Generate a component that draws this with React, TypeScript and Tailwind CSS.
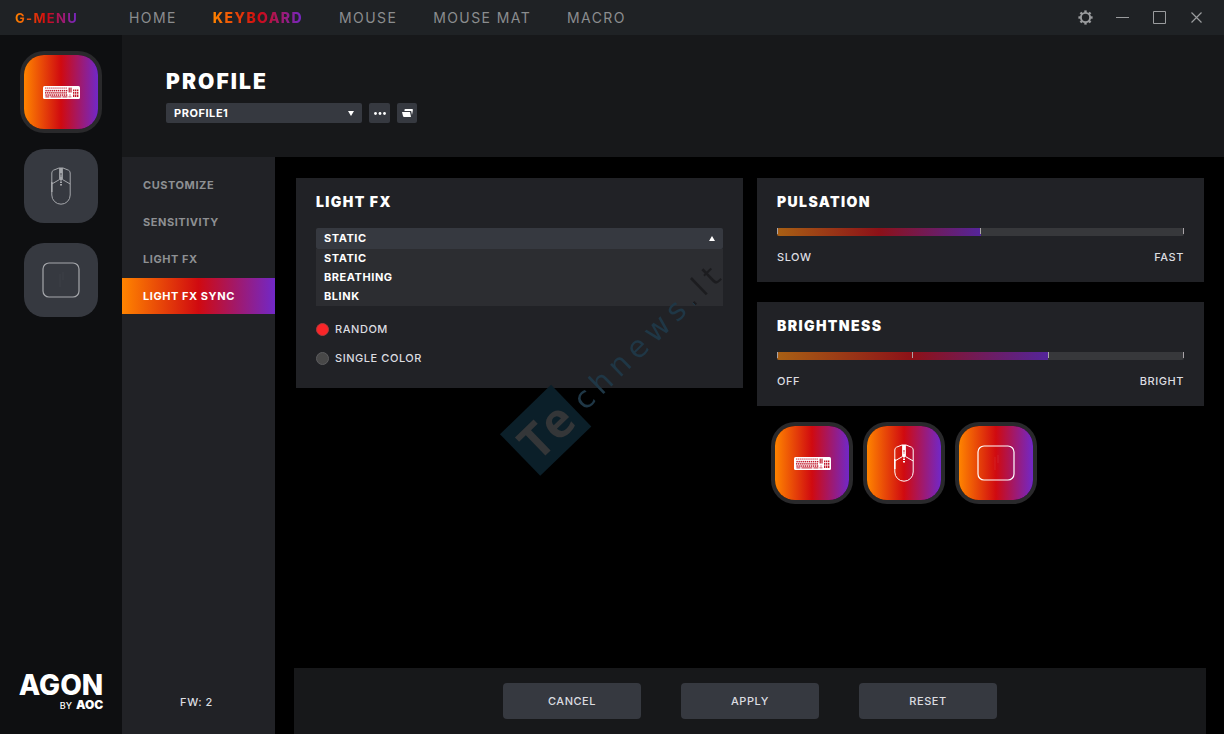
import { useState } from "react";
import type { ReactNode } from "react";
import clsx from "clsx";

const NAV_ITEMS = ["HOME", "KEYBOARD", "MOUSE", "MOUSE MAT", "MACRO"];
const SECTIONS = ["CUSTOMIZE", "SENSITIVITY", "LIGHT FX", "LIGHT FX SYNC"];
const EFFECTS = ["STATIC", "BREATHING", "BLINK"];
const BRAND = "bg-linear-to-r/srgb from-[#ff8400] via-[#d00a10] to-[#7128c8]";

function KeyboardIcon() {
  const columns = Array.from({ length: 11 }, (_, i) => i);
  return (
    <svg width="37" height="13" viewBox="0 0 37 13" aria-hidden="true">
      <rect width="37" height="13" rx="1.5" fill="#fff" />
      <g fill="#c01a2c">
        {[1.6, 3.9, 6.1, 8.3].map((y, row) =>
          columns.map((col) => (
            <rect key={`${row}-${col}`} x={2 + col * 2.05 + (row % 2) * 0.4} y={y} width="1.4" height={row === 0 ? 0.9 : 1.5} />
          )),
        )}
        <rect x="2.4" y="10.4" width="4" height="1" />
        <rect x="7.4" y="10.4" width="11" height="1" />
        <rect x="19.4" y="10.4" width="5" height="1" />
        {[25.6, 27.4].map((x) => (
          <rect key={x} x={x} y="1.6" width="1.2" height="4.9" />
        ))}
        <path d="M25.4 10.4h3v.9h-3zM26.5 8.6h1v1h-1z" />
        {[30, 32, 34].map((x) => (
          <path key={x} d={`M${x} 3.5h1.4v1.8h-1.4zM${x} 6h1.4v1.8h-1.4zM${x} 8.5h1.4v2.6h-1.4z`} />
        ))}
      </g>
    </svg>
  );
}

function MouseIcon() {
  return (
    <svg width="20" height="38" viewBox="0 0 20 38" fill="none" stroke="currentColor" aria-hidden="true">
      <path d="M8 1 2.500 3.200Q.8 4 .8 6v22a9.2 9.2 0 0 0 18.4 0V6q0-2-1.700-2.800L12 1Z" />
      <path d="M.8 17 8.4 12.6M19.2 17 11.6 12.6" />
      <path d="M.8 15v10" strokeWidth="1.5" />
      <path d="M8.6 1v11.5h2.8V1" />
      <path d="M10 1v4M10 9.5v4M10 14.5v1.5M10 17v1.5" strokeWidth="2" />
      <path d="M10 5v5" strokeWidth="2" strokeDasharray="1 .6" />
    </svg>
  );
}

function MouseMatIcon() {
  return (
    <svg width="38" height="36" viewBox="0 0 38 36" fill="none" stroke="currentColor" aria-hidden="true">
      <rect x="1" y="1" width="36" height="34" rx="6" strokeWidth="1.2" />
      <path d="M18 12v13M21 10v8" strokeWidth="0.8" opacity="0.1" />
    </svg>
  );
}

function GearIcon() {
  return (
    <svg width="15" height="15" viewBox="0 0 15 15" fill="none" stroke="currentColor" aria-hidden="true">
      <circle cx="7.5" cy="7.5" r="4.6" strokeWidth="1.9" />
      {[0, 45, 90, 135, 180, 225, 270, 315].map((angle) => (
        <path key={angle} d="M7.5 .4v2.4" strokeWidth="2.4" transform={`rotate(${angle} 7.5 7.5)`} />
      ))}
    </svg>
  );
}

function DeviceTile({ label, active, children }: { label: string; active?: boolean; children: ReactNode }) {
  return (
    <button
      type="button"
      aria-label={label}
      aria-pressed={!!active}
      className={clsx(
        "flex size-[74px] shrink-0 items-center justify-center rounded-[20px]",
        active ? `${BRAND} text-white ring-4 ring-[#29292b]` : "bg-[#363940] text-[#a5a7ab]",
      )}
    >
      {children}
    </button>
  );
}

function SliderCard(props: { title: string; low: string; high: string; steps: number; initial: number }) {
  const { title, low, high, steps, initial } = props;
  const [value, setValue] = useState(initial);
  const id = title.toLowerCase();

  return (
    <section className="bg-[#212226] px-5 pt-3.5 pb-[15px]">
      <h2 className="text-sm leading-5 font-black tracking-widest text-white">
        <label htmlFor={id}>{title}</label>
      </h2>
      <div className="relative mt-4 h-2">
        <input
          id={id}
          type="range"
          min={0}
          max={steps}
          value={value}
          onChange={(e) => setValue(Number(e.target.value))}
          className="block h-2 w-full cursor-pointer appearance-none rounded-xs bg-[#37383b] [&::-webkit-slider-thumb]:size-0 [&::-webkit-slider-thumb]:appearance-none"
        />
        <div
          className="pointer-events-none absolute inset-y-0 left-0 rounded-l-xs bg-linear-to-r/srgb from-[#a86014] via-[#8c1118] to-[#54259a]"
          style={{ width: `${(value / steps) * 100}%` }}
        />
        <div className="pointer-events-none absolute inset-x-0 top-0 flex h-1.5 justify-between">
          {Array.from({ length: steps + 1 }, (_, i) => (
            <span key={i} className="w-px bg-[#a9a4a8]" />
          ))}
        </div>
      </div>
      <div className="mt-[11px] flex justify-between text-[11px] leading-5 font-medium tracking-wider text-[#dcdde0]">
        <span>{low}</span>
        <span>{high}</span>
      </div>
    </section>
  );
}

function LightFxCard() {
  const [effect, setEffect] = useState("STATIC");
  const [mode, setMode] = useState("RANDOM");

  return (
    <section className="bg-[#212226] px-5 pt-3.5 pb-5">
      <h2 className="text-sm leading-5 font-black tracking-widest text-white">LIGHT FX</h2>
      <div className="relative mt-4">
        <select
          aria-label="Light FX"
          value={effect}
          onChange={(e) => setEffect(e.target.value)}
          className="block h-[21px] w-full appearance-none rounded-xs bg-[#363940] px-2 text-[11px] font-bold tracking-wider text-white"
        >
          {EFFECTS.map((name) => (
            <option key={name}>{name}</option>
          ))}
        </select>
        <svg className="pointer-events-none absolute top-2 right-2" width="6" height="5" viewBox="0 0 6 5" fill="#fff" aria-hidden="true">
          <path d="M3 0 6 5H0Z" />
        </svg>
      </div>
      <ul className="bg-[#2c2d31]">
        {EFFECTS.map((name) => (
          <li key={name}>
            <button
              type="button"
              onClick={() => setEffect(name)}
              className="block w-full px-2 text-left text-[11px] leading-[19px] font-bold tracking-wider text-white hover:bg-[#363940]"
            >
              {name}
            </button>
          </li>
        ))}
      </ul>
      <div className="mt-[13px] flex flex-col gap-[9px]">
        {["RANDOM", "SINGLE COLOR"].map((name) => (
          <label key={name} className="flex items-center gap-1.5 text-[11px] leading-5 font-medium tracking-wider text-[#dcdde0]">
            <input
              type="radio"
              name="color-mode"
              checked={mode === name}
              onChange={() => setMode(name)}
              className="size-[13px] appearance-none rounded-full border border-[#5c5c5e] bg-[#484848] checked:border-[#b03a3c] checked:bg-[#fa2528]"
            />
            {name}
          </label>
        ))}
      </div>
    </section>
  );
}

function Watermark() {
  return (
    <div
      aria-hidden="true"
      className="pointer-events-none absolute top-[401px] left-[510px] flex h-[58px] origin-[36px_29px] -rotate-44 items-center gap-1.5 font-['Open_Sans',sans-serif] select-none"
    >
      <span className="flex h-[58px] w-[71px] items-center justify-center bg-[#0b1f29] text-5xl font-bold text-[#343638]">
        Te
      </span>
      {/* the ".lt" part is the dark end of the hard-stop gradient */}
      <span className="bg-linear-to-r from-[#1f3746] from-78% to-[#1c1c1f] to-78% bg-clip-text pt-2 font-['DejaVu_Sans',sans-serif] text-3xl tracking-[0.2em] text-transparent">
        chnews.lt
      </span>
    </div>
  );
}

export default function App() {
  const [section, setSection] = useState("LIGHT FX SYNC");

  return (
    <div className="relative flex min-h-screen flex-col overflow-hidden bg-black font-['Inter',sans-serif]">
      <header className="flex h-[35px] items-center bg-[#1f2225] pr-2.5 pl-[15px] text-sm">
        <div className="w-[114px]">
          <span className={`${BRAND} bg-clip-text text-[13px] font-bold tracking-widest text-transparent`}>G-MENU</span>
        </div>
        <nav className="flex gap-9">
          {NAV_ITEMS.map((item) => (
            <a
              key={item}
              href={`#${item.toLowerCase().replace(" ", "-")}`}
              className={clsx(
                "tracking-widest",
                item === "KEYBOARD" ? `${BRAND} bg-clip-text font-extrabold text-transparent` : "text-[#8b8d8f]",
              )}
            >
              {item}
            </a>
          ))}
        </nav>
        <div className="ml-auto flex gap-px text-[#9a9c9e]">
          <button type="button" aria-label="Settings" className="flex size-9 items-center justify-center">
            <GearIcon />
          </button>
          <button type="button" aria-label="Minimize" className="flex size-9 items-center justify-center">
            <svg width="13" height="13" viewBox="0 0 13 13" stroke="currentColor" aria-hidden="true">
              <path d="M0 6.5h13" />
            </svg>
          </button>
          <button type="button" aria-label="Maximize" className="flex size-9 items-center justify-center">
            <svg width="13" height="13" viewBox="0 0 13 13" fill="none" stroke="currentColor" aria-hidden="true">
              <path d="M.5 .5h12v12H.5Z" />
            </svg>
          </button>
          <button type="button" aria-label="Close" className="flex size-9 items-center justify-center">
            <svg width="11" height="11" viewBox="0 0 11 11" stroke="currentColor" strokeWidth="1.2" aria-hidden="true">
              <path d="m.5 .5 10 10m0-10-10 10" />
            </svg>
          </button>
        </div>
      </header>

      <div className="flex flex-1">
        <aside className="flex w-[122px] shrink-0 flex-col items-center gap-5 bg-[#0e0f11] pt-5 pb-[22px]">
          <DeviceTile label="Keyboard" active>
            <KeyboardIcon />
          </DeviceTile>
          <DeviceTile label="Mouse">
            <MouseIcon />
          </DeviceTile>
          <DeviceTile label="Mouse mat">
            <MouseMatIcon />
          </DeviceTile>
          <div className="mt-auto flex flex-col items-end text-white">
            <span className="text-[28px] leading-7 font-extrabold">AGON</span>
            <span className="flex items-baseline gap-1 text-[9px] leading-3 font-medium">
              BY <b className="text-xs leading-3 font-black">AOC</b>
            </span>
          </div>
        </aside>

        <div className="flex min-w-0 flex-1 flex-col">
          <section className="bg-[#17181a] px-11 pt-[35px] pb-[34px]">
            <h1 className="text-[21px] leading-6 font-black tracking-widest text-white">PROFILE</h1>
            <div className="mt-[9px] flex gap-[7px]">
              <div className="relative w-[196px]">
                <select
                  aria-label="Profile"
                  className="block h-5 w-full appearance-none rounded-xs bg-[#363940] px-2 text-[11px] font-bold tracking-wider text-white"
                >
                  <option>PROFILE1</option>
                </select>
                <svg className="pointer-events-none absolute top-2 right-2" width="6" height="5" viewBox="0 0 6 5" fill="#fff" aria-hidden="true">
                  <path d="M0 0h6L3 5Z" />
                </svg>
              </div>
              <button type="button" aria-label="More" className="flex h-5 w-[21px] items-center justify-center rounded-xs bg-[#363940]">
                <svg width="12" height="3" viewBox="0 0 12 3" fill="#fff" aria-hidden="true">
                  <circle cx="1.5" cy="1.5" r="1.4" />
                  <circle cx="6" cy="1.5" r="1.4" />
                  <circle cx="10.5" cy="1.5" r="1.4" />
                </svg>
              </button>
              <button type="button" aria-label="Open folder" className="flex size-5 items-center justify-center rounded-xs bg-[#363940]">
                <svg width="11" height="8" viewBox="0 0 11 8" fill="#fff" aria-hidden="true">
                  <path d="M0 3h8l1 5H2Q1.300 8 1 7ZM2.500 .8Q2.500 0 3.400 0H10.200Q11 0 10.900 1L10 6 9.200 2H2.500Z" />
                </svg>
              </button>
            </div>
          </section>

          <div className="flex flex-1">
            <nav className="flex w-[153px] shrink-0 flex-col gap-px bg-[#212226] pt-2.5 pb-[22px]">
              {SECTIONS.map((name) => (
                <button
                  key={name}
                  type="button"
                  onClick={() => setSection(name)}
                  className={clsx(
                    "h-9 px-[21px] text-left text-[11px] font-bold tracking-wider",
                    section === name ? `${BRAND} text-white` : "text-[#8e9093]",
                  )}
                >
                  {name}
                </button>
              ))}
              <p className="mt-auto pr-1 text-center text-[11px] leading-5 font-medium tracking-wider text-[#dcdde0]">FW: 2</p>
            </nav>

            <main className="flex min-w-0 flex-1 flex-col">
              <div className="grid grid-cols-2 items-start gap-3.5 pt-[21px] pr-5 pl-[21px]">
                <LightFxCard />
                <div className="flex flex-col gap-5">
                  <SliderCard title="PULSATION" low="SLOW" high="FAST" steps={2} initial={1} />
                  <SliderCard title="BRIGHTNESS" low="OFF" high="BRIGHT" steps={3} initial={2} />
                  <div className="flex gap-[18px] pl-[18px]">
                    <DeviceTile label="Sync keyboard" active>
                      <KeyboardIcon />
                    </DeviceTile>
                    <DeviceTile label="Sync mouse" active>
                      <MouseIcon />
                    </DeviceTile>
                    <DeviceTile label="Sync mouse mat" active>
                      <MouseMatIcon />
                    </DeviceTile>
                  </div>
                </div>
              </div>

              <footer className="mt-auto mr-[18px] ml-[19px] flex justify-center gap-10 bg-[#17181a] py-[15px]">
                {["CANCEL", "APPLY", "RESET"].map((name) => (
                  <button
                    key={name}
                    type="button"
                    className="h-9 w-[138px] rounded-sm bg-[#363940] text-[11px] font-medium tracking-wider text-[#dcdde0]"
                  >
                    {name}
                  </button>
                ))}
              </footer>
            </main>
          </div>
        </div>
      </div>

      <Watermark />
    </div>
  );
}
